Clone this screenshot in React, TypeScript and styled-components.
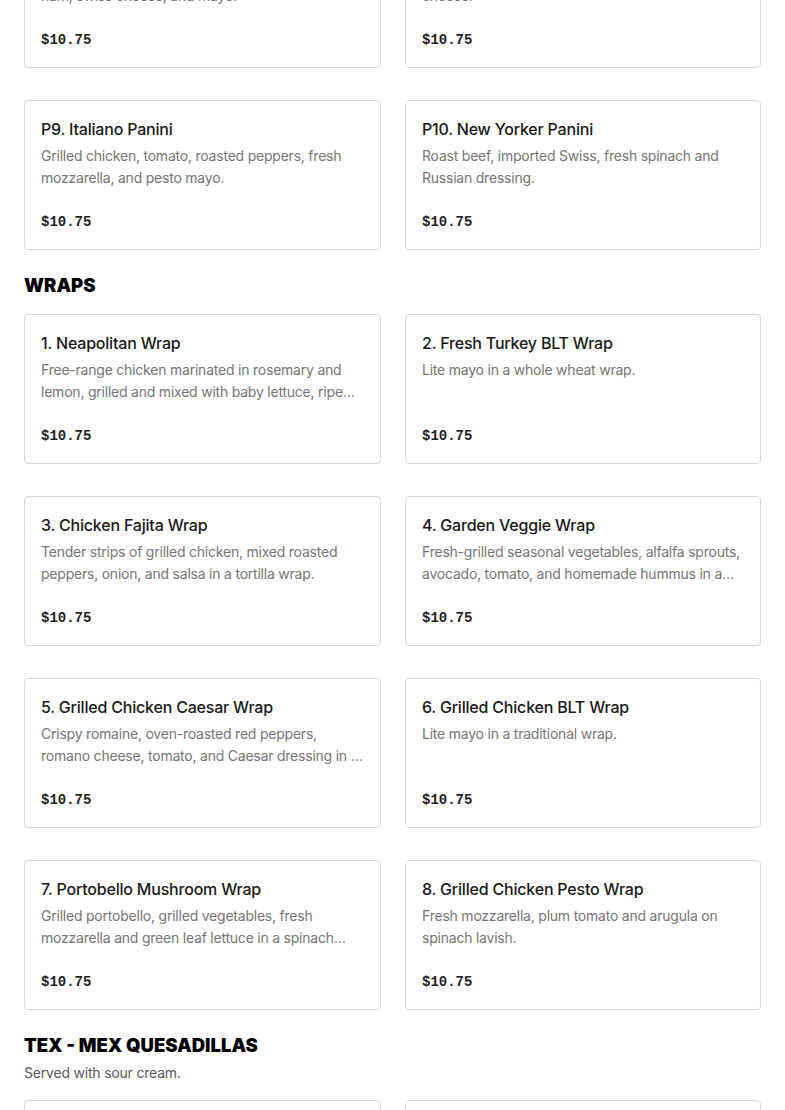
import React from "react";
import styled, { createGlobalStyle } from "styled-components";

const Global = createGlobalStyle`
  html, body { margin: 0; padding: 0; background: #fff; }
  body { font-family: "Inter", "Noto Sans", sans-serif; overflow: hidden; }
  * { box-sizing: border-box; }
`;

const Page = styled.main`
  width: 785px;
  padding: 0 24px;
`;

const Section = styled.section<{ $first?: boolean }>`
  margin-top: ${(p) => (p.$first ? "-82px" : "23px")};
`;

const Heading = styled.h2<{ $hasSub?: boolean }>`
  margin: 0 0 ${(p) => (p.$hasSub ? "4px" : "17px")};
  padding-top: 1px;
  font-family: "Inter", "Liberation Sans", sans-serif;
  font-weight: 900;
  font-size: 18.5px;
  line-height: 23px;
  letter-spacing: 0;
  color: #000;
  text-transform: uppercase;
`;

const Sub = styled.p`
  margin: 0 0 17px;
  padding-top: 1px;
  font-size: 14px;
  line-height: 21px;
  letter-spacing: -0.2px;
  color: #595959;
`;

const Grid = styled.div`
  display: grid;
  grid-template-columns: 357px 356px;
  column-gap: 24px;
  row-gap: 32px;
`;

const Card = styled.article`
  height: 150px;
  border: 1px solid #d9d9d9;
  border-radius: 4px;
  padding: 16px 16px 16px;
  display: flex;
  flex-direction: column;
`;

const Title = styled.h3`
  margin: 0;
  font-size: 16px;
  font-weight: 500;
  line-height: 24px;
  letter-spacing: -0.2px;
  color: #191919;
  white-space: nowrap;
  overflow: hidden;
  text-overflow: ellipsis;
`;

const Desc = styled.p`
  margin: 4px 0 0;
  height: 44px;
  font-size: 14px;
  line-height: 22px;
  letter-spacing: -0.22px;
  color: #767676;
  display: -webkit-box;
  -webkit-line-clamp: 2;
  -webkit-box-orient: vertical;
  overflow: hidden;
`;

const Price = styled.span`
  margin-top: auto;
  font-family: "Liberation Mono", "DejaVu Sans Mono", monospace;
  font-weight: 700;
  font-size: 14px;
  line-height: 22px;
  color: #1f1f1f;
`;

type Item = { name: string; desc: string; price: string };

const panini: Item[] = [
  { name: "P7. Black Forest Panini", desc: "Roasted turkey breast, crispy bacon, Black Forest ham, swiss cheese, and mayo.", price: "$10.75" },
  { name: "P8. Turkey Club Panini", desc: "Roast turkey, bacon, lettuce, tomato, and cheddar cheese.", price: "$10.75" },
  { name: "P9. Italiano Panini", desc: "Grilled chicken, tomato, roasted peppers, fresh mozzarella, and pesto mayo.", price: "$10.75" },
  { name: "P10. New Yorker Panini", desc: "Roast beef, imported Swiss, fresh spinach and Russian dressing.", price: "$10.75" },
];

const wraps: Item[] = [
  { name: "1. Neapolitan Wrap", desc: "Free-range chicken marinated in rosemary and lemon, grilled and mixed with baby lettuce, ripe tomatoes and balsamic vinaigrette.", price: "$10.75" },
  { name: "2. Fresh Turkey BLT Wrap", desc: "Lite mayo in a whole wheat wrap.", price: "$10.75" },
  { name: "3. Chicken Fajita Wrap", desc: "Tender strips of grilled chicken, mixed roasted peppers, onion, and salsa in a tortilla wrap.", price: "$10.75" },
  { name: "4. Garden Veggie Wrap", desc: "Fresh-grilled seasonal vegetables, alfalfa sprouts, avocado, tomato, and homemade hummus in a spinach wrap.", price: "$10.75" },
  { name: "5. Grilled Chicken Caesar Wrap", desc: "Crispy romaine, oven-roasted red peppers, romano cheese, tomato, and Caesar dressing in a whole wheat wrap.", price: "$10.75" },
  { name: "6. Grilled Chicken BLT Wrap", desc: "Lite mayo in a traditional wrap.", price: "$10.75" },
  { name: "7. Portobello Mushroom Wrap", desc: "Grilled portobello, grilled vegetables, fresh mozzarella and green leaf lettuce in a spinach wrap.", price: "$10.75" },
  { name: "8. Grilled Chicken Pesto Wrap", desc: "Fresh mozzarella, plum tomato and arugula on spinach lavish.", price: "$10.75" },
];

const quesadillas: Item[] = [
  { name: "1. Chicken Quesadilla", desc: "Grilled chicken, cheddar and jack cheese.", price: "$10.75" },
  { name: "2. Veggie Quesadilla", desc: "Grilled vegetables, cheddar and jack cheese.", price: "$10.75" },
];

const Cards = ({ items }: { items: Item[] }) => (
  <Grid>
    {items.map((it) => (
      <Card key={it.name}>
        <Title>{it.name}</Title>
        <Desc>{it.desc}</Desc>
        <Price>{it.price}</Price>
      </Card>
    ))}
  </Grid>
);

export default function App() {
  return (
    <>
      <Global />
      <Page>
        <Section $first>
          <Cards items={panini} />
        </Section>
        <Section>
          <Heading>Wraps</Heading>
          <Cards items={wraps} />
        </Section>
        <Section>
          <Heading $hasSub>Tex - Mex Quesadillas</Heading>
          <Sub>Served with sour cream.</Sub>
          <Cards items={quesadillas} />
        </Section>
      </Page>
    </>
  );
}
